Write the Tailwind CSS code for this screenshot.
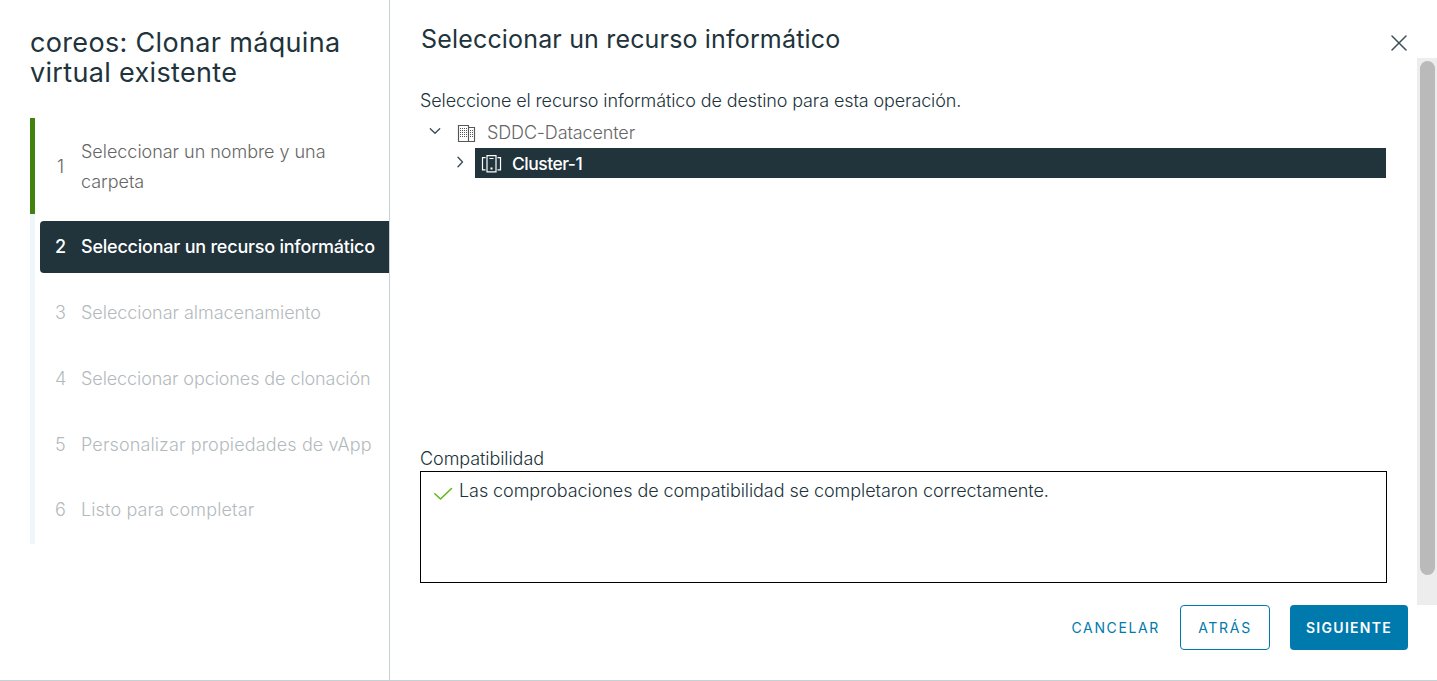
<!DOCTYPE html>
<html lang="es">
<head>
<meta charset="utf-8">
<title>Clonar máquina virtual existente</title>
<script src="https://cdn.jsdelivr.net/npm/@tailwindcss/browser@4"></script>
</head>
<body class="relative flex h-[681px] w-[1437px] overflow-hidden border-b border-[#c6d1d6] bg-white font-['Inter',sans-serif] text-[18px] font-light text-[#21333b]">
  <aside class="flex w-[390px] shrink-0 flex-col border-r border-[#c6d1d6] pl-[30px] pt-[28px]">
    <h1 class="h-[90px] text-[27px]/[30px] font-normal tracking-[0.33px]">coreos: Clonar máquina<br>virtual existente</h1>
    <ol class="flex flex-col">
      <li class="flex h-24 items-center border-l-5 border-[#42810e] pl-[22px] text-[#666]">
        <span class="w-[24px]">1</span><span class="pt-[2px] leading-[30px] tracking-[-0.03px]">Seleccionar un nombre y una<br>carpeta</span>
      </li>
      <li class="h-[66px] border-l-5 border-[#eff6f9] pl-[5px] pt-[7px]">
        <div class="flex h-[52px] items-center rounded-l-[4px] bg-[#21333b] pb-px pl-[15px] font-medium text-white">
          <span class="w-[26px]">2</span><span class="whitespace-nowrap tracking-[-0.22px]">Seleccionar un recurso informático</span>
        </div>
      </li>
      <li class="flex h-[66px] items-center border-l-5 border-[#eff6f9] pb-px pl-[20px] text-[#b3babd]"><span class="w-[26px]">3</span><span class="whitespace-nowrap tracking-[-0.04px]">Seleccionar almacenamiento</span></li>
      <li class="flex h-[66px] items-center border-l-5 border-[#eff6f9] pb-px pl-[20px] text-[#b3babd]"><span class="w-[26px]">4</span><span class="whitespace-nowrap tracking-[-0.09px]">Seleccionar opciones de clonación</span></li>
      <li class="flex h-[66px] items-center border-l-5 border-[#eff6f9] pb-px pl-[20px] text-[#b3babd]"><span class="w-[26px]">5</span><span class="whitespace-nowrap tracking-[0.13px]">Personalizar propiedades de vApp</span></li>
      <li class="flex h-[66px] items-center border-l-5 border-[#eff6f9] pb-[3px] pl-[20px] text-[#b3babd]"><span class="w-[26px]">6</span><span class="tracking-[0.13px]">Listo para completar</span></li>
    </ol>
  </aside>

  <main class="flex grow flex-col">
    <header class="flex h-[58px] items-start justify-between pl-[31px] pr-[30px] pt-[24px]">
      <h2 class="text-[25px]/[30px] font-normal tracking-[0.17px]">Seleccionar un recurso informático</h2>
      <svg class="mt-[11px] h-4 w-4" viewBox="0 0 16 16" fill="none" stroke="#3d4f58" stroke-width="1.5" stroke-linecap="round"><path d="M1 1 15 15M15 1 1 15"/></svg>
    </header>
    <div class="flex h-[547px]">
      <section class="flex w-[1027px] flex-col pl-[30px] pr-[30px] pt-[27px]">
        <p class="h-[33px] pt-px leading-[30px] tracking-[-0.12px]">Seleccione el recurso informático de destino para esta operación.</p>
        <div class="flex h-[30px] items-center pl-[9px] text-[#666]">
          <svg class="mb-[4px] h-3 w-3" viewBox="0 0 12 12" fill="none" stroke="#3d4f58" stroke-width="1.4" stroke-linecap="round" stroke-linejoin="round"><path d="M1.300 3.800 6 8.300l4.700-4.500"/></svg>
          <svg class="ml-[16px] h-[18px] w-[19px]" viewBox="0 0 19 18" fill="none" stroke="#565656" stroke-width="1.150"><path d="M1.500 17.500V1.500h10v16zM11.500 3.500h6v14h-6"/><path stroke-width="1" stroke-dasharray="1 1" d="M3 4.500h7M3 6.500h7M3 8.500h7M3 10.500h7M3 12.500h7M13 6.500h3M13 8.500h3M13 10.500h3M13 12.500h3"/></svg>
          <span class="ml-[11px] pb-px tracking-[-0.13px]">SDDC-Datacenter</span>
        </div>
        <div class="mr-px flex h-[30px] items-center pl-[34px]">
          <svg class="mb-[2px] h-3 w-3" viewBox="0 0 12 12" fill="none" stroke="#3d4f58" stroke-width="1.400" stroke-linecap="round" stroke-linejoin="round"><path d="M4 1.300 8.500 6 4 10.700"/></svg>
          <div class="ml-[9px] flex h-full grow items-center bg-[#21333b] pl-[6px] pt-[2px] font-medium text-white">
            <svg class="h-[18px] w-[21px]" viewBox="0 0 21 18" fill="none" stroke="#fff" stroke-width="1.200"><path d="M6 .6h9v16.300H6zM4.500 2.600H1.500v12.300h3M16.500 2.600h3v12.300h-3M8.500 3.500h4"/><rect x="9.500" y="12.500" width="2" height="2" fill="#fff" stroke="none"/></svg>
            <span class="ml-[10px] text-[17.500px] tracking-[-0.5px]">Cluster-1</span>
          </div>
        </div>
        <div class="mt-[265px] h-[28px] pt-px leading-[30px] tracking-[-0.07px]">Compatibilidad</div>
        <div class="flex h-[112px] items-start border border-black pl-[12px] pt-[4px]">
          <svg class="mt-[8px] h-[18px] w-[20px]" viewBox="0 0 20 18" fill="none" stroke="#5eb715" stroke-width="1.500" stroke-linecap="round" stroke-linejoin="round"><path d="M1.800 9.800 7.500 15 18.500 4.500"/></svg>
          <span class="ml-[6px] leading-[30px] tracking-[-0.07px]">Las comprobaciones de compatibilidad se completaron correctamente.</span>
        </div>
      </section>
      <div class="w-[20px] bg-[#ededed] px-[3px] pt-[3px]"><div class="h-[514px] w-[15px] rounded-full bg-[#bababa]"></div></div>
    </div>
    <footer class="flex items-start justify-end pr-[29px] text-[14px] font-normal text-[#0079ad]">
      <button class="mr-5 h-[45px] tracking-[1.640px]">CANCELAR</button>
      <button class="mr-5 h-[45px] w-[90px] rounded-[4px] border border-[#0079ad] tracking-[1.700px]">ATRÁS</button>
      <button class="h-[45px] w-[118px] rounded-[4px] bg-[#0079ad] font-semibold tracking-[1.300px] text-white">SIGUIENTE</button>
    </footer>
  </main>
</body>
</html>
